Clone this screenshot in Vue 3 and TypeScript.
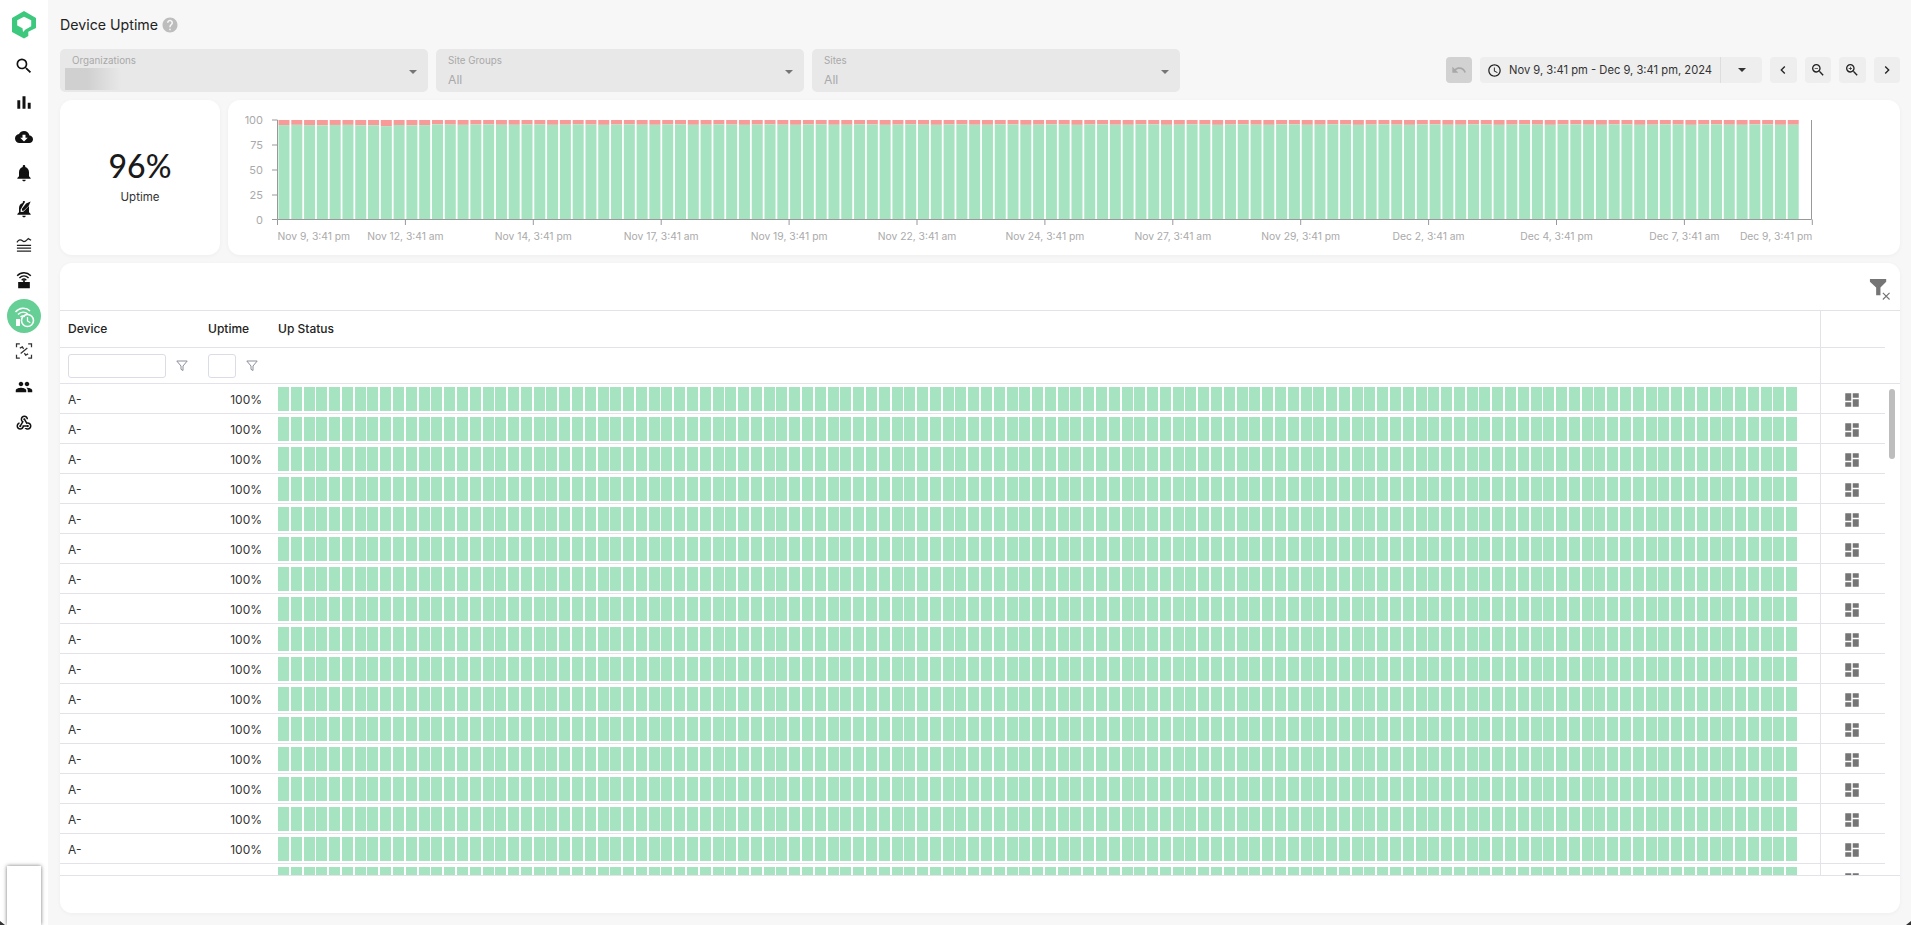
<script setup lang="ts">
const bars = Array.from({ length: 119 }, (_, i) => {
  const base = i < 12 ? 94.9 : 95.4
  const up = i === 8 ? 93.8 : base + Math.sin(i * 1.7) * 0.25
  return { x: 278.5 + i * 12.79, y: 219.5 - up * 0.995 }
})
const xLabels = [
  'Nov 9, 3:41 pm', 'Nov 12, 3:41 am', 'Nov 14, 3:41 pm', 'Nov 17, 3:41 am', 'Nov 19, 3:41 pm',
  'Nov 22, 3:41 am', 'Nov 24, 3:41 pm', 'Nov 27, 3:41 am', 'Nov 29, 3:41 pm', 'Dec 2, 3:41 am',
  'Dec 4, 3:41 pm', 'Dec 7, 3:41 am', 'Dec 9, 3:41 pm',
].map((text, i) => ({
  text,
  x: 277.5 + i * 127.9,
  anchor: i === 0 ? 'start' : i === 12 ? 'end' : 'middle',
}))
const yTicks = [
  { label: '100', y: 120 }, { label: '75', y: 145 }, { label: '50', y: 170 },
  { label: '25', y: 195 }, { label: '0', y: 219.5 },
]
const rows = Array.from({ length: 17 }, (_, i) => i)
const lastRow = rows.length - 1
const cells = Array.from({ length: 119 }, (_, i) => i)
const selects = [
  { label: 'Organizations', value: '', blurred: true },
  { label: 'Site Groups', value: 'All', blurred: false },
  { label: 'Sites', value: 'All', blurred: false },
]
const search = 'M15.5 14h-.79l-.28-.27A6.471 6.471 0 0 0 16 9.5 6.5 6.5 0 1 0 9.5 16c1.61 0 3.09-.59 4.23-1.57l.27.28v.79l5 4.99L20.49 19l-4.99-5zm-6 0C7.01 14 5 11.99 5 9.5S7.01 5 9.5 5 14 7.01 14 9.5 11.99 14 9.5 14z'
const dashboard = 'M3 13h8V3H3v10zm0 8h8v-6H3v6zm10 0h8V11h-8v10zm0-18v6h8V3h-8z'
</script>

<template>
  <div class="page">
    <aside class="side">
      <svg class="logo" viewBox="0 0 24 28">
        <path d="M12 0 24 7v10l-7.700 3.700v4.300L12 27.500 0 21V7z" fill="#3cc97e" />
        <path d="M5.200 9.200 12 5.800l7.200 3.400v6l-5.700 3.300-2.500 2.500-.5-3.800-5.300-2.700z" fill="#fff" />
      </svg>
      <div class="nav"><svg viewBox="0 0 24 24" class="ni"><path :d="search" /></svg></div>
      <div class="nav"><svg viewBox="0 0 24 24" class="ni"><path d="M4 10h3.500v10H4zM10.200 5h3.600v15h-3.600zM16.500 13H20v7h-3.500z" /></svg></div>
      <div class="nav"><svg viewBox="0 0 24 24" class="ni cloud"><path d="M19.350 10.040C18.670 6.590 15.640 4 12 4 9.110 4 6.600 5.640 5.350 8.040 2.340 8.360 0 10.910 0 14c0 3.310 2.690 6 6 6h13c2.760 0 5-2.240 5-5 0-2.640-2.050-4.780-4.650-4.960zM17 13l-5 5-5-5h3V9h4v4h3z" /></svg></div>
      <div class="nav"><svg viewBox="0 0 24 24" class="ni"><path d="M12 22c1.100 0 2-.9 2-2h-4c0 1.100.89 2 2 2zm6-6v-5c0-3.070-1.640-5.640-4.500-6.320V4c0-.83-.67-1.500-1.500-1.500s-1.500.67-1.500 1.500v.68C7.630 5.360 6 7.920 6 11v5l-2 2v1h16v-1l-2-2z" /></svg></div>
      <div class="nav"><svg viewBox="0 0 24 24" class="ni"><path d="M12 22c1.100 0 2-.9 2-2h-4c0 1.100.89 2 2 2zM10.500 4.700V4c0-.83.67-1.500 1.500-1.500.6 0 1.100.35 1.350.85L8 12.500v3l3.200-.1 6.800-7V16l2 2v1H4v-1l2-2v-5c0-3.080 1.630-5.640 4.500-6.300z" /><path d="M14.500 5.500 20 3l-2.500 5.500-6 5.500H9.500v-2.300z" /></svg></div>
      <div class="nav"><svg viewBox="0 0 24 24" class="ni line"><path d="M3.500 10c2.500-3.500 4.500-3.500 7 -1.500s4-.5 6.500-3l3.500 2M3.500 13.500h17M3.500 17h17M3.500 20.500h17" /></svg></div>
      <div class="nav"><svg viewBox="0 0 24 24" class="ni"><path d="M5 14.500h6V12h2v2.500h6V22H5z" /><path d="M3.800 6.800C8.500 2 15.500 2 20.200 6.800M6.500 9.500c3.200-3.200 7.800-3.200 11 0M9.200 12.200c1.600-1.500 4-1.500 5.600 0" fill="none" stroke="#111" stroke-width="1.700" /></svg></div>
      <div class="nav"><div class="active">
        <svg viewBox="0 0 24 24" class="ai"><path d="M3.500 8C7.500 3.500 14 3 18 7M6 10.500c3-3 7-3 10-.5M8.500 13c1.500-1.200 3-1.200 4.500-.4" fill="none" stroke="#fff" stroke-width="1.500" /><path d="M4 15h4v7H4z" fill="#fff" /><circle cx="15.500" cy="16.500" r="6" fill="none" stroke="#fff" stroke-width="1.600" /><path d="M15.500 13v4l2.800 1.700" fill="none" stroke="#fff" stroke-width="1.300" /></svg>
      </div></div>
      <div class="nav"><svg viewBox="0 0 24 24" class="ni thin"><path d="M3 7.500V3.500h4M17 3.500h4v4M3 16.500v4h4M17 20.500h4v-4M7 8.500l3-1.500 1.500 2.500M17 15.500l-3 1.500-1.500-2.500M8 15l8-6.500" fill="none" stroke="#333" stroke-width="1.500" /></svg></div>
      <div class="nav"><svg viewBox="0 0 24 24" class="ni people"><path d="M16 11c1.660 0 2.990-1.340 2.990-3S17.660 5 16 5c-1.660 0-3 1.340-3 3s1.340 3 3 3zm-8 0c1.660 0 2.990-1.340 2.990-3S9.660 5 8 5C6.340 5 5 6.340 5 8s1.340 3 3 3zm0 2c-2.330 0-7 1.170-7 3.500V19h14v-2.500c0-2.330-4.670-3.500-7-3.500zm8 0c-.29 0-.62.02-.97.05 1.160.84 1.970 1.970 1.970 3.450V19h6v-2.500c0-2.330-4.670-3.500-7-3.500z" /></svg></div>
      <div class="nav"><svg viewBox="0 0 24 24" class="ni people"><path d="M10 15h5.880c.27-.31.67-.5 1.120-.5.830 0 1.500.67 1.500 1.500s-.67 1.500-1.500 1.500c-.44 0-.84-.19-1.120-.5H11.900c-.46 2.280-2.480 4-4.900 4-2.760 0-5-2.240-5-5 0-2.420 1.720-4.440 4-4.900v2.070c-1.160.41-2 1.530-2 2.830 0 1.650 1.350 3 3 3s3-1.350 3-3v-1zm2.500-11c1.650 0 3 1.350 3 3h2c0-2.760-2.240-5-5-5s-5 2.240-5 5c0 1.430.6 2.710 1.560 3.620l-2.350 3.900c-.68.14-1.210.75-1.210 1.480 0 .83.67 1.500 1.500 1.500s1.500-.67 1.500-1.500c0-.16-.02-.31-.07-.45l3.380-5.630C10.490 9.610 9.500 8.420 9.500 7c0-1.650 1.350-3 3-3zm4.500 9c-.64 0-1.230.2-1.720.54l-3.050-5.070C11.530 8.350 11 7.740 11 7c0-.83.67-1.500 1.500-1.500S14 6.170 14 7c0 .15-.02.29-.06.43l2.190 3.650c.28-.05.57-.08.87-.08 2.760 0 5 2.240 5 5s-2.240 5-5 5c-1.850 0-3.470-1.010-4.330-2.500h2.670c.48.32 1.050.5 1.660.5 1.650 0 3-1.350 3-3s-1.350-3-3-3z" /></svg></div>
      <div class="stub"></div>
    </aside>

    <main class="main">
      <div class="title-row">
        <h1 class="title">Device Uptime</h1>
        <svg viewBox="0 0 24 24" class="help"><path d="M12 2C6.480 2 2 6.480 2 12s4.480 10 10 10 10-4.480 10-10S17.520 2 12 2zm1 17h-2v-2h2v2zm2.070-7.750l-.9.92C13.450 12.900 13 13.500 13 15h-2v-.5c0-1.100.45-2.100 1.170-2.830l1.240-1.260c.37-.36.59-.86.59-1.410 0-1.100-.9-2-2-2s-2 .9-2 2H8c0-2.210 1.790-4 4-4s4 1.790 4 4c0 .88-.36 1.680-.93 2.250z" /></svg>
      </div>

      <div class="filters">
        <div v-for="s in selects" :key="s.label" class="select">
          <span class="s-label">{{ s.label }}</span>
          <span v-if="s.blurred" class="s-blur"></span>
          <span v-else class="s-value">{{ s.value }}</span>
          <i class="caret"></i>
        </div>
        <div class="tools">
          <button class="btn undo"><svg viewBox="0 0 24 24"><path d="M12.500 8c-2.650 0-5.050.99-6.900 2.600L2 7v9h9l-3.620-3.620c1.390-1.160 3.160-1.880 5.120-1.880 3.540 0 6.550 2.310 7.600 5.500l2.370-.78C21.080 11.030 17.150 8 12.500 8z" /></svg></button>
          <div class="range">
            <svg viewBox="0 0 24 24" class="clock"><path d="M11.990 2C6.470 2 2 6.480 2 12s4.470 10 9.990 10C17.520 22 22 17.520 22 12S17.520 2 11.990 2zM12 20c-4.420 0-8-3.580-8-8s3.580-8 8-8 8 3.580 8 8-3.580 8-8 8zm.5-13H11v6l5.250 3.150.75-1.230-4.500-2.670z" /></svg>
            <span class="range-text">Nov 9, 3:41 pm - Dec 9, 3:41 pm, 2024</span>
            <span class="range-drop"><i class="caret dark"></i></span>
          </div>
          <button class="btn"><svg viewBox="0 0 24 24"><path d="M15.410 7.410 14 6l-6 6 6 6 1.410-1.410L10.830 12z" /></svg></button>
          <button class="btn"><svg viewBox="0 0 24 24"><path :d="search" /><path d="M7 9h5v1H7z" /></svg></button>
          <button class="btn"><svg viewBox="0 0 24 24"><path :d="search" /><path d="M12 10h-2v2H9v-2H7V9h2V7h1v2h2v1z" /></svg></button>
          <button class="btn"><svg viewBox="0 0 24 24"><path d="M10 6 8.590 7.410 13.170 12l-4.580 4.590L10 18l6-6z" /></svg></button>
        </div>
      </div>

      <div class="summary">
        <section class="card stat">
          <div class="stat-num">96%</div>
          <div class="stat-label">Uptime</div>
        </section>
        <section class="card chart">
          <svg viewBox="228 100 1672 155" class="chart-svg">
            <g v-for="(b, i) in bars" :key="i">
              <rect :x="b.x" y="120" width="11" :height="b.y - 120" fill="#f89b98" />
              <rect :x="b.x" :y="b.y" width="11" :height="219.500 - b.y" fill="#a5e3c1" />
            </g>
            <path d="M277.500 120V219.500H1811.500V120" fill="none" stroke="#999" />
            <path v-for="t in yTicks" :key="t.label" :d="`M272 ${t.y}H277.500`" stroke="#999" />
            <path v-for="l in xLabels" :key="l.text" :d="`M${l.x} 219.500V225`" stroke="#999" />
            <text v-for="t in yTicks" :key="t.label + 't'" x="263" :y="t.y + 4" text-anchor="end" class="tick-y">{{ t.label }}</text>
            <text v-for="l in xLabels" :key="l.text + 't'" :x="l.x" y="240" :text-anchor="l.anchor" class="tick-x">{{ l.text }}</text>
          </svg>
        </section>
      </div>

      <section class="card table">
        <div class="tbar">
          <svg viewBox="0 0 24 24" class="clear"><path d="M2 2h17v3l-6 6v8H8.500v-8L2 5z" fill="#757575" /><path d="M15.500 16.500l7 7M22.500 16.500l-7 7" stroke="#757575" stroke-width="1.200" fill="none" /></svg>
        </div>
        <div class="thead">
          <div class="grid head-row">
            <div class="c">Device</div>
            <div class="c">Uptime</div>
            <div class="c">Up Status</div>
            <div class="c act"></div>
          </div>
          <div class="grid filter-row">
            <div class="c f"><input class="inp wide" aria-label="Device filter" />
              <svg viewBox="0 0 12 12" class="funnel"><path d="M.8 1h10.400L7 6v4.500L5 9.300V6z" /></svg>
            </div>
            <div class="c f"><input class="inp narrow" aria-label="Uptime filter" />
              <svg viewBox="0 0 12 12" class="funnel"><path d="M.8 1h10.400L7 6v4.500L5 9.300V6z" /></svg>
            </div>
            <div class="c"></div>
            <div class="c act"></div>
          </div>
        </div>
        <div class="tbody">
          <div v-for="r in rows" :key="r" class="grid row">
            <div class="c txt"><template v-if="r !== lastRow">A-</template></div>
            <div class="c txt up"><template v-if="r !== lastRow">100%</template></div>
            <div class="c cells">
              <span v-for="c in cells" :key="c" class="cell"></span>
            </div>
            <div class="c act icon"><svg viewBox="0 0 24 24" class="dash"><path :d="dashboard" /></svg></div>
          </div>
          <div class="thumb"></div>
        </div>
      </section>
    </main>
    <i class="corner left"></i>
    <i class="corner right"></i>
  </div>
</template>

<style scoped>
.page {
  position: relative;
  display: flex;
  height: 925px;
  overflow: hidden;
  background: #f7f7f7;
  font-family: Inter, "Liberation Sans", sans-serif;
  color: #333;
}
.corner {
  position: absolute;
  bottom: 0;
  width: 5px;
  height: 4px;
  background: #333;
}
.corner.left { left: 0; clip-path: polygon(0 0, 100% 100%, 0 100%); }
.corner.right { right: 0; clip-path: polygon(100% 0, 100% 100%, 0 100%); }
.side {
  width: 48px;
  flex: none;
  background: #fff;
  display: flex;
  flex-direction: column;
  align-items: center;
}
.logo { width: 24px; height: 28px; margin-top: 11px; margin-bottom: 9px; flex: none; }
.nav {
  height: 35.700px;
  width: 48px;
  display: flex;
  align-items: center;
  justify-content: center;
  flex: none;
}
.ni { width: 20px; height: 20px; fill: #111; }
.ni.cloud, .ni.people { width: 18px; height: 18px; }
.ni.cloud { width: 20px; }
.ni.line { fill: none; stroke: #222; stroke-width: 1.500; }
.active {
  width: 34px;
  height: 34px;
  border-radius: 50%;
  background: #66cf95;
  display: flex;
  align-items: center;
  justify-content: center;
}
.ai { width: 24px; height: 24px; }
.stub {
  margin-top: auto;
  width: 34px;
  height: 59px;
  background: #fff;
  box-shadow: 0 0 4px rgba(0, 0, 0, 0.55);
  flex: none;
}
.main {
  flex: 1;
  min-width: 0;
  padding: 0 11px 12px 12px;
  display: flex;
  flex-direction: column;
}
.title-row {
  height: 49px;
  display: flex;
  align-items: center;
  gap: 3px;
  flex: none;
}
.title { margin: 0; font-size: 14.200px; font-weight: 400; color: #222; }
.help { width: 18px; height: 18px; fill: #bdbdbd; }
.filters {
  display: flex;
  gap: 8px;
  height: 43px;
  flex: none;
}
.select {
  position: relative;
  width: 368px;
  background: #e8e8e8;
  border-radius: 5px;
  flex: none;
}
.s-label {
  position: absolute;
  left: 12px;
  top: 6px;
  font-size: 9.800px;
  color: #a9a9a9;
}
.s-value {
  position: absolute;
  left: 12px;
  top: 23px;
  font-size: 12.200px;
  color: #a9a9a9;
}
.s-blur {
  position: absolute;
  left: 5px;
  top: 19px;
  width: 56px;
  height: 22px;
  background: linear-gradient(90deg, #d0d0d0 40%, #e8e8e8);
}
.caret {
  display: block;
  width: 0;
  height: 0;
  border-left: 4px solid transparent;
  border-right: 4px solid transparent;
  border-top: 4px solid #757575;
}
.select .caret { position: absolute; right: 11px; top: 21px; }
.caret.dark { border-top-color: #333; }
.tools {
  margin-left: auto;
  display: flex;
  gap: 8px;
  align-items: flex-start;
  padding-top: 8px;
}
.btn {
  width: 26.500px;
  height: 26px;
  padding: 0;
  border: 0;
  border-radius: 4px;
  background: #eee;
  display: flex;
  align-items: center;
  justify-content: center;
}
.btn svg { width: 16px; height: 16px; fill: #222; }
.btn.undo { background: #d2d2d2; }
.btn.undo svg { fill: #a8a8a8; }
.range {
  width: 282px;
  height: 26px;
  box-sizing: border-box;
  background: #eee;
  border-radius: 4px;
  display: flex;
  align-items: center;
  padding-left: 7px;
}
.clock { width: 15px; height: 15px; fill: #222; flex: none; }
.range-text {
  margin-left: 7px;
  font-size: 11.200px;
  white-space: nowrap;
  color: #333;
  flex: 1;
}
.range-drop {
  width: 41px;
  height: 26px;
  border-left: 1px solid #ddd;
  display: flex;
  align-items: center;
  justify-content: center;
  flex: none;
}
.summary {
  display: flex;
  gap: 8px;
  margin-top: 8px;
  height: 155px;
  flex: none;
}
.card {
  background: #fff;
  border-radius: 12px;
  box-shadow: 0 1px 4px rgba(0, 0, 0, 0.04);
}
.stat {
  width: 160px;
  flex: none;
  display: flex;
  flex-direction: column;
  align-items: center;
  padding-top: 45px;
  box-sizing: border-box;
}
.stat-num { font-family: Lato, sans-serif; font-size: 32px; font-weight: 500; line-height: 42px; color: #1a1a1a; }
.stat-label { font-size: 11.500px; margin-top: 3px; color: #333; }
.chart { flex: 1; min-width: 0; }
.chart-svg { display: block; width: 1672px; height: 155px; }
.tick-y { font-size: 11px; fill: #aaa; font-family: Inter, sans-serif; }
.tick-x { font-size: 10.300px; fill: #aaa; font-family: Inter, sans-serif; }
.table {
  margin-top: 8px;
  height: 650px;
  flex: none;
  overflow: hidden;
}
.tbar {
  height: 47px;
  display: flex;
  justify-content: flex-end;
  align-items: center;
  padding-right: 9px;
  box-sizing: border-box;
}
.clear { width: 23px; height: 23px; margin-top: 4px; }
.thead { border-top: 1px solid #e2e2e8; border-bottom: 1px solid #e2e2e8; }
.grid {
  display: grid;
  grid-template-columns: 140px 70px 1550px 65px;
  width: 1825px;
}
.c {
  padding: 0 8px;
  box-sizing: border-box;
  display: flex;
  align-items: center;
  font-size: 12px;
  min-width: 0;
}
.act { border-left: 1px solid #e2e2e8; padding: 0; }
.head-row {
  height: 37px;
  border-bottom: 1px solid #e2e2e8;
  box-sizing: border-box;
  color: #222;
}
.head-row .c { font-weight: 500; padding-bottom: 2px; }
.filter-row { height: 35px; }
.f { gap: 10px; }
.inp {
  height: 24px;
  box-sizing: border-box;
  border: 1px solid #dcdce6;
  border-radius: 3px;
  background: #fff;
  padding: 0;
  flex: none;
}
.wide { width: 98px; }
.narrow { width: 28px; }
.funnel {
  width: 12px;
  height: 12px;
  flex: none;
  fill: none;
  stroke: #8b8f9c;
  stroke-width: 1;
}
.tbody {
  position: relative;
  height: 491px;
  overflow: hidden;
  border-bottom: 1px solid #e2e2e8;
}
.row {
  height: 30px;
  box-sizing: border-box;
  border-bottom: 1px solid #e2e2e8;
}
.txt { padding-top: 2px; }
.up { justify-content: flex-end; }
.cells {
  align-items: flex-start;
  padding-top: 3px;
  gap: 1.790px;
}
.cell {
  width: 11px;
  height: 24px;
  background: #a5e3c1;
  flex: none;
}
.icon { justify-content: center; padding: 3px 2px 0 0; }
.dash { width: 18px; height: 18px; fill: #757575; }
.thumb {
  position: absolute;
  left: 1829px;
  top: 5px;
  width: 6px;
  height: 70px;
  border-radius: 3px;
  background: #bdbdbd;
}
</style>

<style>
html, body { margin: 0; overflow: hidden; }
</style>
